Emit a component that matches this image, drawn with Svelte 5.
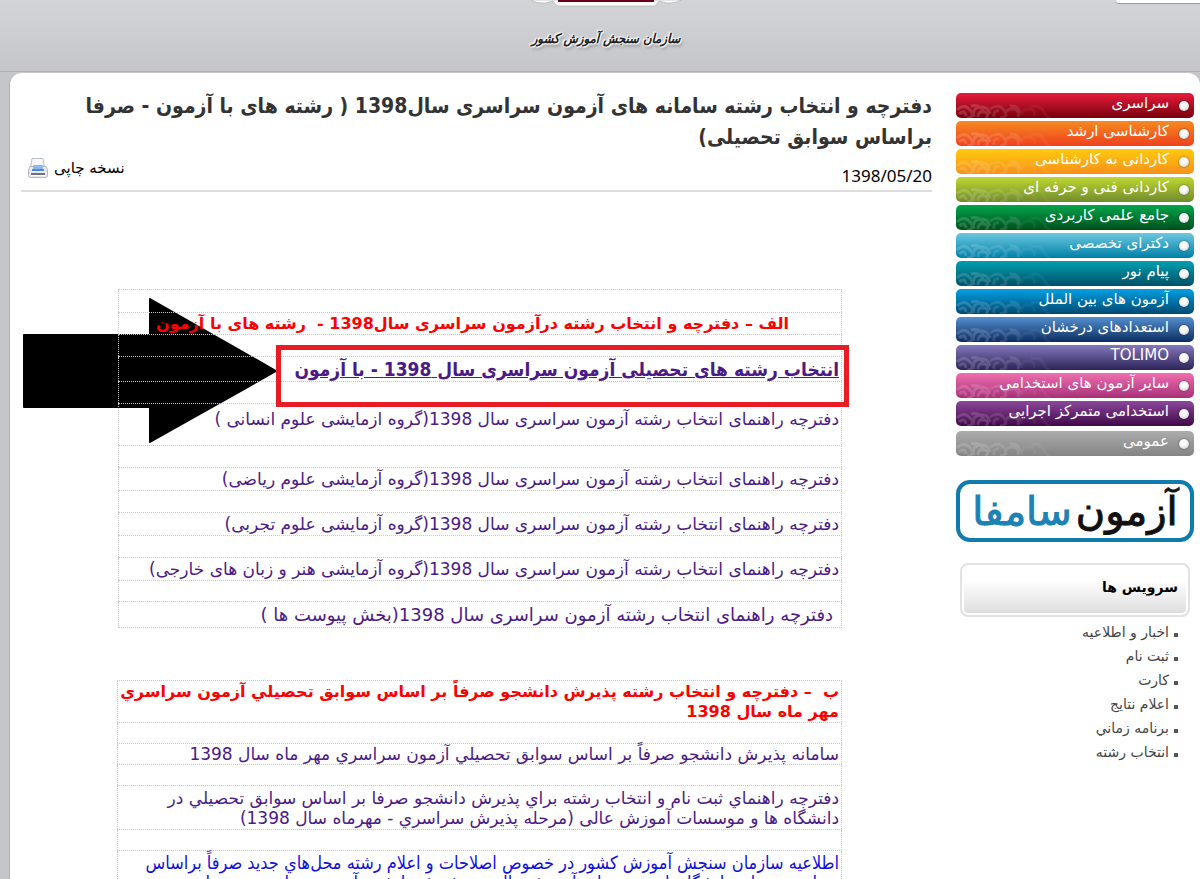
<script lang="ts">
    type Row = { text?: string; kind?: string; height: number };

    const exams = [
        { title: "سراسری", from: "#e81c3c", to: "#78000c" },
        { title: "کارشناسی ارشد", from: "#f58a20", to: "#f0401f" },
        { title: "کاردانی به کارشناسی", from: "#ffcb0c", to: "#f8901c" },
        { title: "کاردانی فنی و حرفه ای", from: "#bfd730", to: "#708c2c" },
        { title: "جامع علمی کاربردی", from: "#00a54c", to: "#00501c" },
        { title: "دکترای تخصصی", from: "#6cc8e0", to: "#0080a8" },
        { title: "پیام نور", from: "#00a0b0", to: "#005068" },
        { title: "آزمون های بین الملل", from: "#00a0e4", to: "#004870" },
        { title: "استعدادهای درخشان", from: "#5490d0", to: "#0c2c60" },
        { title: "TOLIMO", from: "#8478bc", to: "#2c2458" },
        { title: "سایر آزمون های استخدامی", from: "#f070b0", to: "#a83078" },
        { title: "استخدامی متمرکز اجرایی", from: "#8c489c", to: "#400848" },
        { title: "عمومی", from: "#acacac", to: "#848484" },
    ];

    const services = [
        "اخبار و اطلاعیه",
        "ثبت نام",
        "کارت",
        "اعلام نتایج",
        "برنامه زماني",
        "انتخاب رشته",
    ];

    const withExam: Row[] = [
        { height: 23 },
        { text: "الف – دفترچه و انتخاب رشته درآزمون سراسری سال1398 -  رشته های با آزمون", kind: "heading indent", height: 22 },
        { height: 22 },
        { text: "انتخاب رشته های تحصیلی آزمون سراسری سال 1398 - با آزمون", kind: "main", height: 25 },
        { height: 22 },
        { text: "دفترچه راهنمای انتخاب رشته آزمون سراسری سال 1398(گروه ازمایشی علوم انسانی )", kind: "link top", height: 42 },
        { height: 22 },
        { text: "دفترچه راهنمای انتخاب رشته آزمون سراسری سال 1398(گروه آزمایشی علوم ریاضی)", kind: "link", height: 23 },
        { height: 22 },
        { text: "دفترچه راهنمای انتخاب رشته آزمون سراسری سال 1398(گروه آزمایشی علوم تجربی)", kind: "link", height: 23 },
        { height: 22 },
        { text: "دفترچه راهنمای انتخاب رشته آزمون سراسری سال 1398(گروه آزمایشی هنر و زبان های خارجی)", kind: "link", height: 23 },
        { height: 21 },
        { text: "دفترچه راهنمای انتخاب رشته آزمون سراسری سال 1398(بخش پیوست ها )", kind: "link appendix", height: 26 },
    ];

    const byRecords: Row[] = [
        { text: "ب  – دفترچه و انتخاب رشته پذیرش دانشجو صرفاً بر اساس سوابق تحصیلي آزمون سراسري\nمهر ماه سال 1398", kind: "heading", height: 42 },
        { height: 21 },
        { text: "سامانه پذیرش دانشجو صرفاً بر اساس سوابق تحصیلي آزمون سراسري مهر ماه سال 1398", kind: "link", height: 21 },
        { height: 21 },
        { text: "دفترچه راهنماي ثبت نام و انتخاب رشته براي پذیرش دانشجو صرفا بر اساس سوابق تحصیلي در\nدانشگاه ها و موسسات آموزش عالی (مرحله پذیرش سراسري - مهرماه سال 1398)", kind: "link", height: 44 },
        { height: 21 },
        { text: "اطلاعیه سازمان سنجش آموزش کشور در خصوص اصلاحات و اعلام رشته محل‌هاي جدید صرفاً براساس\nسوابق تحصیلي دانشگاه‌ها و موسسات آموزش عالي در پذیرش دانشجو آزمون سراسري مهرماه", kind: "link fresh", height: 44 },
    ];
</script>

{#snippet rows(list: Row[])}
    <table>
        <tbody>
            {#each list as row}
                <tr style="height: {row.height}px">
                    <td class={row.kind ?? "blank"}>
                        {#if row.text && row.kind?.startsWith("heading")}
                            {row.text}
                        {:else if row.text}
                            <a href="#top">{row.text}</a>
                        {/if}
                    </td>
                </tr>
            {/each}
        </tbody>
    </table>
{/snippet}

<div class="page" id="top" dir="rtl" lang="fa">
    <header>
        <svg class="emblem" viewBox="0 0 150 7" width="150" height="7" aria-hidden="true">
            <path d="M0 0Q4 3 14 3L22 1L26 6H124L128 1L136 3Q146 3 150 0Z" fill="#fff" stroke="#aaa" stroke-width="0.6" />
            <path d="M27 0H123V2H27Z" fill="#6a0014" />
        </svg>
        <div class="org">سازمان سنجش آموزش کشور</div>
        <div class="tab"></div>
    </header>

    <div class="panel">
        <aside>
            <nav>
                {#each exams as exam}
                    <a class="exam" href="#top" style="background: linear-gradient({exam.from}, {exam.to})">
                        <i class="dot"></i>
                        <span>{exam.title}</span>
                        <svg class="swirl" viewBox="0 0 96 14" width="96" height="14" aria-hidden="true">
                            <g fill="none" stroke="#fff" stroke-width="3">
                                <path opacity=".16" d="M1 6Q8-1 14 6T11 14M3 10Q9 5 10 12M18 13Q16 4 24 3T34 10M22 13Q22 7 28 8T30 14M15 2Q24 0 28 8" />
                                <path opacity=".12" d="M34 5Q43-1 48 6T44 14M38 13Q37 6 43 7M50 13Q48 5 56 5T62 13M54 2Q62 1 64 9" />
                                <path opacity=".05" d="M65 12Q66 4 73 5T78 12M75 3Q84 0 88 8T93 12" />
                            </g>
                        </svg>
                    </a>
                {/each}
            </nav>

            <a class="samfa" href="#top"><span>آزمون</span><b>سامفا</b></a>

            <h2>سرویس ها</h2>
            <ul>
                {#each services as service}
                    <li><a href="#top">{service}</a></li>
                {/each}
            </ul>
        </aside>

        <main>
            <h1>دفترچه و انتخاب رشته سامانه های آزمون سراسری سال1398 ( رشته های با آزمون - صرفا براساس سوابق تحصیلی)</h1>
            <div class="meta">
                <time>1398/05/20</time>
                <a class="print" href="#top">
                    نسخه چاپی
                    <svg viewBox="0 0 22 22" width="22" height="22" aria-hidden="true">
                        <path d="M5 1.5H16L17.5 11H3.5Z" fill="#f6f8fb" stroke="#b9c0c8" />
                        <path d="M3 9.5L1.5 13V18.5Q1.5 20.5 3.5 20.5H18.5Q20.5 20.5 20.5 18.5V13L19 9.5Z" fill="#e8eaee" stroke="#b3b7bd" />
                        <path d="M6 8H16V13H6Z" fill="#8db8f0" />
                        <path d="M5 12H17V14H5Z" fill="#4d86d4" />
                        <path d="M4 16H18V18H4Z" fill="#6a727c" />
                        <path d="M4 18H18V19H4Z" fill="#fff" />
                    </svg>
                </a>
            </div>

            <div class="sheet">
                <svg class="arrow" viewBox="0 0 254 146" width="254" height="146" aria-hidden="true">
                    <path d="M1 37H127V1L253 73L127 144V109H1Z" stroke="#000" stroke-width="2" stroke-linejoin="round" />
                </svg>
                {@render rows(withExam)}
                <div class="marker"></div>
            </div>
            <div class="sheet">
                {@render rows(byRecords)}
            </div>
        </main>
    </div>
</div>

<style>
    :global(body) {
        margin: 0;
    }

    .page {
        height: 100vh;
        overflow: hidden;
        background: #c5c6c9;
        font-family: "DejaVu Sans", sans-serif;
        font-size: 16px;
        color: #000;
    }

    a {
        color: inherit;
        text-decoration: none;
    }

    header {
        position: relative;
        height: 71px;
        display: flex;
        flex-direction: column;
        align-items: center;
        padding-left: 12px;
        background: linear-gradient(#d2d4d7, #c6c6ca);
        border-bottom: 1px solid #b9a9ae;
    }

    .emblem {
        display: block;
    }

    .org {
        margin-top: 12px;
        font: italic bold 13px/40px "DejaVu Sans Condensed", "DejaVu Sans", sans-serif;
        white-space: nowrap;
        color: #222;
        text-shadow: 0 0 2px #fff, 1px 1px 1px #fff, -1px -1px 1px #fff, 0 0 3px #fff, 2px 3px 3px #999;
    }

    .tab {
        position: absolute;
        top: 0;
        right: 0;
        width: 84px;
        height: 3px;
        background: #fff;
        border-bottom-left-radius: 8px;
        box-shadow: 0 1px 1px #999;
    }

    .panel {
        display: flex;
        align-items: flex-start;
        gap: 24px;
        margin: 1px 0 0 9px;
        padding: 20px 6px 0 11px;
        min-height: 100vh;
        background: #fff;
        border-left: 1px solid #b0b0b4;
        border-radius: 12px 12px 0 0;
    }

    aside {
        flex: 0 0 238px;
    }

    nav {
        display: flex;
        flex-direction: column;
        gap: 3px;
    }

    .exam {
        position: relative;
        display: flex;
        align-items: center;
        gap: 10px;
        height: 25px;
        padding: 0 5px;
        border-radius: 5px;
        color: #fff;
        font-size: 15px;
        line-height: 16px;
    }

    .exam:last-child {
        margin-top: 2px;
    }

    .exam span {
        padding-bottom: 5px;
    }

    .dot {
        width: 10px;
        height: 10px;
        border-radius: 50%;
        background: radial-gradient(circle at 45% 40%, #fff 30%, #bbb);
        box-shadow: 0 0 2px rgba(0, 0, 0, 0.6);
    }

    .swirl {
        position: absolute;
        left: 0;
        bottom: 0;
    }

    .samfa {
        display: flex;
        align-items: center;
        justify-content: center;
        gap: 4px;
        box-sizing: border-box;
        height: 62px;
        margin-top: 24px;
        border: 4px solid #107cae;
        border-radius: 14px;
        font-size: 40px;
        line-height: 40px;
        color: #111;
        -webkit-text-stroke: 1px;
    }

    .samfa b {
        font-weight: normal;
        color: #1c82b4;
    }

    h2 {
        box-sizing: border-box;
        height: 54px;
        margin: 21px 4px 3px;
        padding: 0 10px;
        border: 2px solid #e2e2e2;
        border-radius: 8px;
        box-shadow: inset 0 0 0 2px #fff;
        background: linear-gradient(#fff 30%, #dcdcdc);
        font-size: 14px;
        line-height: 44px;
    }

    ul {
        margin: 0;
        padding: 0 16px 0 0;
        list-style: none;
    }

    li {
        display: flex;
        align-items: center;
        gap: 5px;
        height: 24px;
        font-size: 14px;
        line-height: 24px;
        color: #444;
    }

    li::before {
        content: "";
        width: 4px;
        height: 4px;
        margin-top: 6px;
        background: #555;
    }

    main {
        flex: 1;
        min-width: 0;
    }

    h1 {
        margin: -2px 0 0;
        font-family: "DejaVu Sans Condensed", "DejaVu Sans", sans-serif;
        font-size: 21px;
        line-height: 31px;
        color: #333;
    }

    .meta {
        display: flex;
        justify-content: space-between;
        align-items: center;
        height: 37px;
        border-bottom: 2px solid #ddd;
    }

    time {
        padding-top: 8px;
        font: 17px/20px "Noto Sans", sans-serif;
    }

    .print {
        display: flex;
        align-items: center;
        gap: 5px;
        margin: 0 0 8px 6px;
        font-size: 15px;
    }

    .sheet {
        position: relative;
        margin: 97px 90px 0 97px;
    }

    .sheet + .sheet {
        margin-top: 52px;
    }

    table {
        position: relative;
        width: 100%;
        border-collapse: collapse;
        border: 1px dotted #c8c8c8;
    }

    td {
        padding: 0 2px;
        border-top: 1px dotted #c8c8c8;
        font-size: 16px;
        line-height: 20px;
        white-space: pre;
    }

    td.blank {
        line-height: 0;
    }

    td.heading {
        font-weight: bold;
        color: #f00;
    }

    td.indent {
        padding-right: 52px;
    }

    td.main {
        font-family: "DejaVu Sans Condensed", "DejaVu Sans", sans-serif;
        font-size: 19px;
        line-height: 24px;
        font-weight: bold;
        color: #4b1a86;
    }

    td.main a {
        text-decoration: underline;
    }

    td.link {
        font-size: 17px;
        color: #4b1a86;
    }

    td.top {
        vertical-align: top;
        padding-top: 5px;
    }

    td.appendix {
        padding-right: 8px;
        font-size: 18px;
    }

    td.fresh {
        font-family: "DejaVu Sans Condensed", "DejaVu Sans", sans-serif;
        font-size: 18px;
        color: #1010e0;
    }

    .arrow {
        position: absolute;
        top: 9px;
        left: -95px;
    }

    .marker {
        position: absolute;
        top: 56px;
        left: 158px;
        right: -7px;
        height: 52px;
        border: 5px solid #e81c24;
    }
</style>
